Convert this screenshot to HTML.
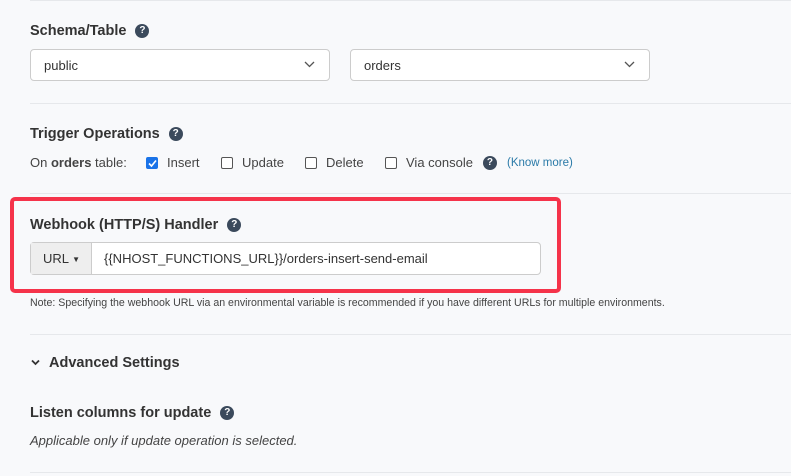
<!DOCTYPE html>
<html><head><meta charset="utf-8"><style>
body{margin:0;width:791px;height:476px;background:#f8f9fb;font-family:"Liberation Sans",sans-serif;color:#333;position:relative;overflow:hidden}
.a{position:absolute;white-space:nowrap}
.hr{position:absolute;left:30px;right:0;height:1px;background:#e6e8eb}
.h{font-weight:bold;font-size:14.5px;color:#333}
.q{display:inline-block;width:14px;height:14px;border-radius:50%;background:#3b4a5c;color:#fff;font-size:10px;font-weight:bold;text-align:center;line-height:14px;vertical-align:middle;position:relative;top:0;margin-left:9px}
.sel{position:absolute;height:32px;background:#fff;border:1px solid #ccc;border-radius:4px;box-sizing:border-box;font-size:13px;line-height:31px;padding-left:13px}
.cb{display:inline-block;width:12px;height:12px;border:1px solid #555;border-radius:2px;background:#fff;vertical-align:-2px;margin-right:9px;box-sizing:border-box}
.row{font-size:13px;color:#444}
</style></head><body>
<div class="hr" style="top:0"></div>
<div class="a h" style="left:30px;top:23px">Schema/Table<span class="q">?</span></div>
<div class="sel" style="left:30px;top:49px;width:300px">public<svg class="a" style="right:14px;top:11px" width="11" height="7"><path d="M1 1l4.5 4.5L10 1" stroke="#555" fill="none" stroke-width="1.3"/></svg></div>
<div class="sel" style="left:350px;top:49px;width:300px">orders<svg class="a" style="right:14px;top:11px" width="11" height="7"><path d="M1 1l4.5 4.5L10 1" stroke="#555" fill="none" stroke-width="1.3"/></svg></div>
<div class="hr" style="top:103px"></div>
<div class="a h" style="left:30px;top:126px">Trigger Operations<span class="q">?</span></div>
<div class="a row" style="left:30px;top:155px">On <b>orders</b> table:
<span class="a" style="left:116px;top:0"><span class="cb" style="background:#1a73e8;border-color:#1a73e8;position:relative"><svg style="position:absolute;left:1px;top:1px" width="9" height="9"><path d="M1 4.5l2.5 2.5L8 1.5" stroke="#fff" stroke-width="1.6" fill="none"/></svg></span>Insert</span>
<span class="a" style="left:191px;top:0"><span class="cb"></span>Update</span>
<span class="a" style="left:275px;top:0"><span class="cb"></span>Delete</span>
<span class="a" style="left:355px;top:0"><span class="cb"></span>Via console<span class="q" style="margin-left:10px;top:-1px">?</span></span>
<span class="a" style="left:477px;top:2px;color:#2a7aa8;font-size:11.5px">(Know more)</span></div>
<div class="hr" style="top:193px"></div>
<div class="a" style="left:10px;top:197px;width:551px;height:96px;border:4px solid #f5334a;border-radius:5px;box-sizing:border-box"></div>
<div class="a h" style="left:30px;top:217px">Webhook (HTTP/S) Handler<span class="q">?</span></div>
<div class="a" style="left:30px;top:242px;width:511px;height:33px;border:1px solid #ccc;border-radius:4px;box-sizing:border-box;background:#fff;font-size:13px;line-height:31px">
<div class="a" style="left:0;top:0;width:61px;height:31px;background:#eee;border-right:1px solid #ccc;padding-left:12px;box-sizing:border-box">URL <span style="font-size:8px;vertical-align:1px">▼</span></div>
<div class="a" style="left:73px;top:0">{{NHOST_FUNCTIONS_URL}}/orders-insert-send-email</div></div>
<div class="a" style="left:30px;top:297px;font-size:10.6px;color:#444">Note: Specifying the webhook URL via an environmental variable is recommended if you have different URLs for multiple environments.</div>
<div class="hr" style="top:334px"></div>
<svg class="a" style="left:31px;top:359px" width="9" height="7"><path d="M1 1.5l3.5 3.5L8 1.5" stroke="#333" stroke-width="1.8" fill="none"/></svg>
<div class="a h" style="left:49px;top:355px">Advanced Settings</div>
<div class="a h" style="left:30px;top:405px">Listen columns for update<span class="q">?</span></div>
<div class="a" style="left:30px;top:433px;font-size:13px;font-style:italic;color:#444">Applicable only if update operation is selected.</div>
<div class="hr" style="top:472px"></div>
</body></html>
